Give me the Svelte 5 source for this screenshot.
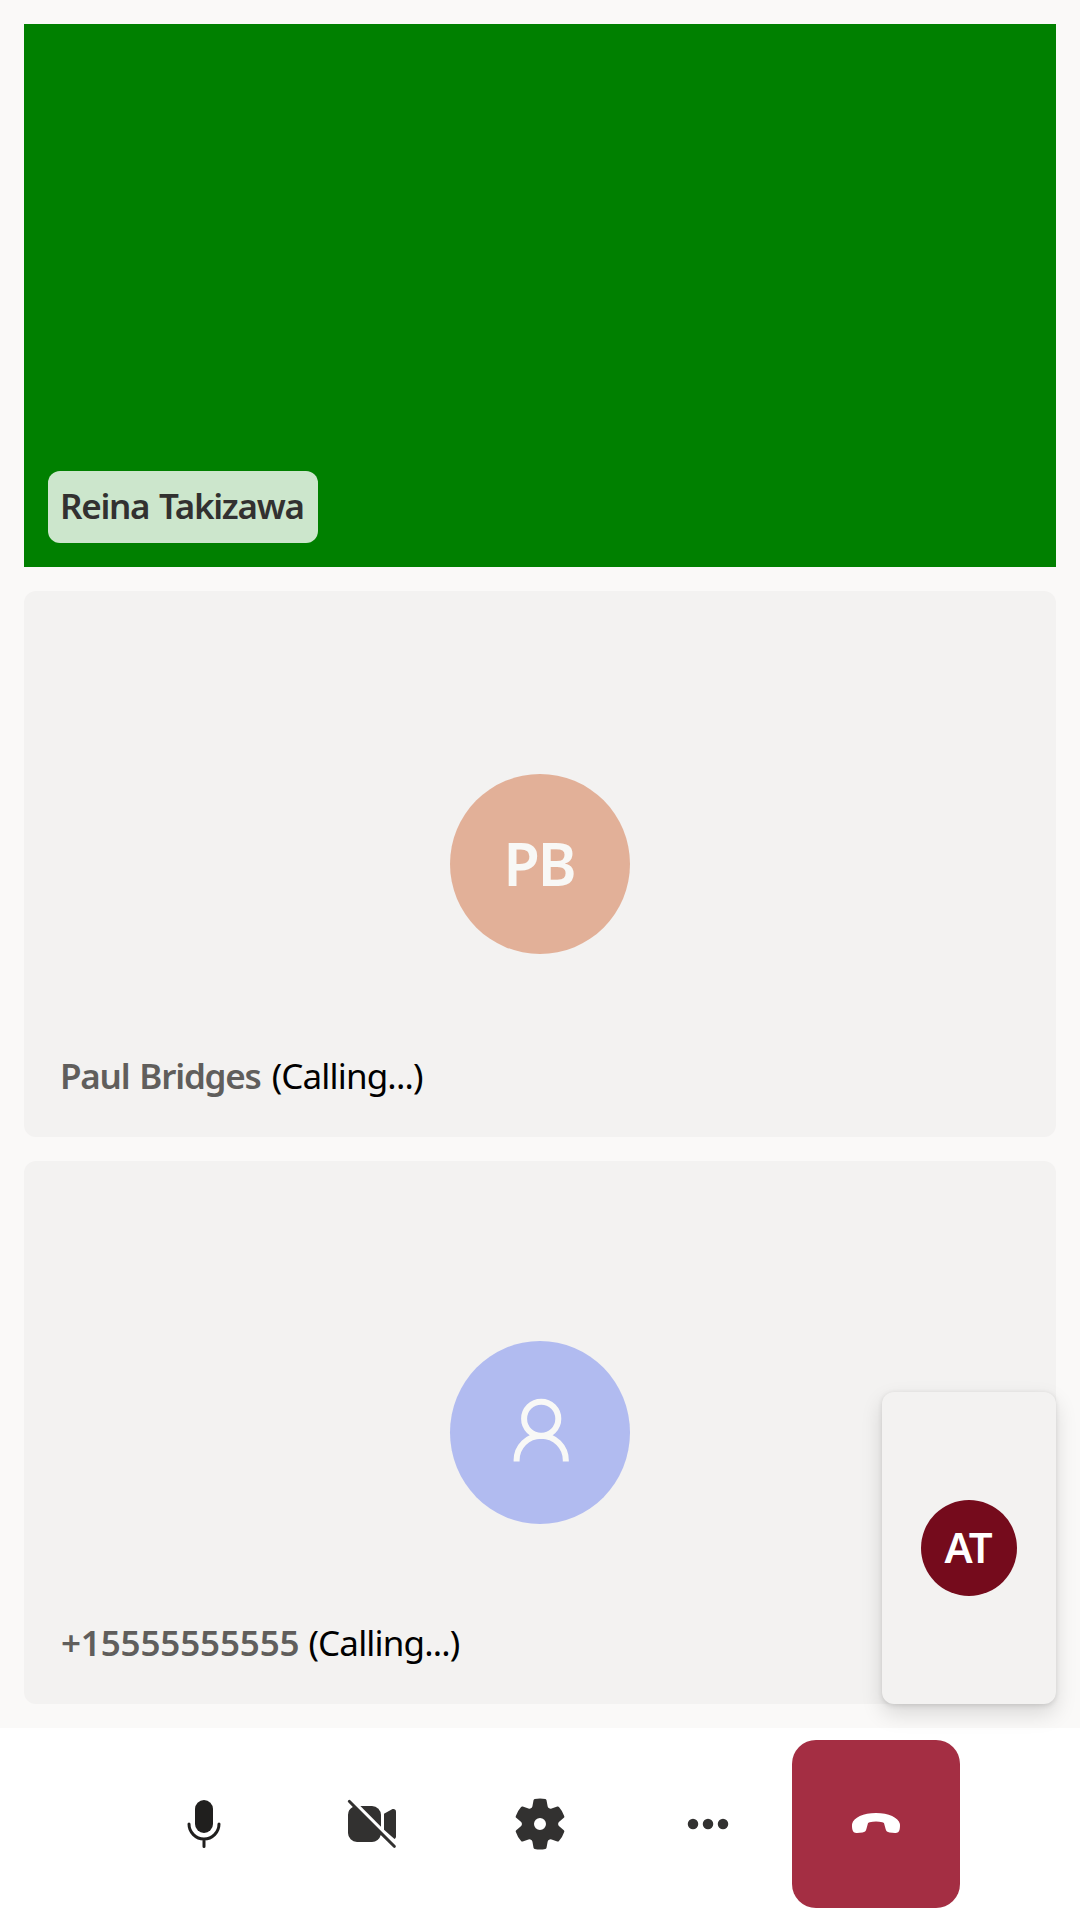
<script>
  const participants = [
    { name: 'Paul Bridges', initials: 'PB', kind: 'paul' },
    { name: '+15555555555', initials: '', kind: 'phone' }
  ];
</script>

<main class="call">
  <section class="gallery">
    <article class="tile video">
      <div class="name-tag"><span class="reina">Reina Takizawa</span></div>
    </article>

    {#each participants as person}
      <article class="tile {person.kind}">
        <div class="persona">
          {#if person.initials}
            <span>{person.initials}</span>
          {:else}
            <svg class="contact" viewBox="0 0 60 60" fill="none" stroke="currentColor" stroke-width="6">
              <circle cx="31.2" cy="18.3" r="17.1" />
              <path d="M6.6 61v-1.2a24.6 24.6 0 0 1 49.2 0V61" />
            </svg>
          {/if}
        </div>
        <div class="caption">
          <span class="who">{person.name}</span>
          <span class="status">(Calling...)</span>
        </div>
      </article>
    {/each}

    <aside class="local"><div class="me"><span>AT</span></div></aside>
  </section>

  <nav class="controls">
    <button class="mic" aria-label="Microphone">
      <svg viewBox="0 0 20 20">
        <rect x="7" y="2" width="6" height="11" rx="3" />
        <path d="M5 10a5 5 0 0 0 10 0M10 15.4v2.1" fill="none" stroke="currentColor" stroke-linecap="round" />
      </svg>
    </button>
    <button aria-label="Camera">
      <svg viewBox="0 0 20 20">
        <path d="M2.85 2.15a.5.5 0 1 0-.7.7l1.46 1.47A3 3 0 0 0 2 7v6a3 3 0 0 0 3 3h5a3 3 0 0 0 2.91-2.3l4.24 4.15a.5.5 0 0 0 .7-.7l-15-15Z" />
        <path d="M6.12 4H10a3 3 0 0 1 3 3v3.88L6.12 4Z" />
        <path d="M14 11.88V6.6l2.55-1.45c.75-.4 1.45 0 1.45.75v8.2c0 .43-.2.73-.5.9L14 11.88Z" />
      </svg>
    </button>
    <button aria-label="Settings">
      <svg viewBox="0 0 20 20">
        <path d="M1.91 7.38A8.5 8.5 0 0 1 3.7 4.3a.5.5 0 0 1 .54-.13l1.92.68a1 1 0 0 0 1.32-.76l.36-2a.5.5 0 0 1 .4-.4 8.53 8.53 0 0 1 3.55 0c.2.04.35.2.38.4l.37 2a1 1 0 0 0 1.32.76l1.92-.68a.5.5 0 0 1 .54.13 8.5 8.5 0 0 1 1.78 3.08c.06.2 0 .4-.15.54l-1.56 1.32a1 1 0 0 0 0 1.52l1.56 1.32c.15.13.21.34.15.54a8.5 8.5 0 0 1-1.78 3.08.5.5 0 0 1-.54.13l-1.92-.68a1 1 0 0 0-1.32.76l-.37 2a.5.5 0 0 1-.38.4 8.53 8.53 0 0 1-3.56 0 .5.5 0 0 1-.39-.4l-.36-2a1 1 0 0 0-1.32-.76l-1.92.68a.5.5 0 0 1-.54-.13 8.5 8.5 0 0 1-1.78-3.08.5.5 0 0 1 .15-.54l1.56-1.32a1 1 0 0 0 0-1.52L2.06 7.92a.5.5 0 0 1-.15-.54ZM8 10a2 2 0 1 0 4 0 2 2 0 0 0-4 0Z" />
      </svg>
    </button>
    <button aria-label="More">
      <svg viewBox="0 0 20 20">
        <circle cx="5" cy="10" r="1.75" /><circle cx="10" cy="10" r="1.75" /><circle cx="15" cy="10" r="1.75" />
      </svg>
    </button>
    <button class="end" aria-label="Leave">
      <svg viewBox="0 0 20 20">
        <path d="M10 6.33C14.2 6.33 17.5 7.9 17.95 9.9C18.05 10.4 18 11.2 17.85 11.9C17.65 12.7 17.1 13.08 16.3 13L14.5 12.85C13.75 12.78 13.4 12.4 13.2 11.7L12.7 9.85C12.65 9.6 12.4 9.5 12.1 9.42C10.8 9.12 9.2 9.12 7.9 9.42C7.6 9.5 7.35 9.6 7.3 9.85L6.8 11.7C6.6 12.4 6.25 12.78 5.5 12.85L3.7 13C2.9 13.08 2.35 12.7 2.15 11.9C2 11.2 1.95 10.4 2.05 9.9C2.5 7.9 5.8 6.33 10 6.33Z" />
      </svg>
    </button>
  </nav>
</main>

<style>
  :global(body) { margin: 0; }
  .call {
    width: 1080px;
    height: 1920px;
    display: flex;
    flex-direction: column;
    background: #fff;
    font-family: 'Segoe UI', 'Noto Sans', 'Open Sans', sans-serif;
  }
  .gallery {
    position: relative;
    box-sizing: border-box;
    height: 1728px;
    padding: 24px;
    display: grid;
    grid-template-rows: 543px 546px 543px;
    gap: 24px;
    background: #faf9f8;
  }
  .tile {
    box-sizing: border-box;
    display: grid;
    grid-template-rows: 1fr auto;
    background: #f3f2f1;
    border-radius: 12px;
    padding: 183px 24px 24px;
  }
  .video {
    display: flex;
    align-items: flex-end;
    background: #008000;
    border-radius: 0;
    padding: 24px;
  }
  .name-tag {
    box-sizing: border-box;
    width: 270px;
    height: 72px;
    padding: 0 12px;
    line-height: 69px;
    border-radius: 12px;
    background: rgba(255, 255, 255, 0.8);
    color: #323130;
    font-size: 35px;
    font-weight: 600;
    white-space: nowrap;
  }
  .reina { letter-spacing: -1.3px; word-spacing: 2px; }
  .persona {
    width: 180px;
    height: 180px;
    border-radius: 50%;
    justify-self: center;
    display: flex;
    align-items: center;
    justify-content: center;
    background: #e2b098;
    color: #f8f8f6;
    font-size: 59px;
    font-weight: 600;
    letter-spacing: -2px;
  }
  .persona span { padding: 0 2px 3px 0; }
  .phone { padding-top: 180px; }
  .phone .persona { height: 183px; background: #b1bbf0; }
  .contact { width: 60px; height: 61px; padding-bottom: 5px; overflow: visible; }
  .caption {
    height: 72px;
    padding: 0 12px;
    display: flex;
    gap: 11px;
    line-height: 69px;
    font-size: 35px;
    white-space: nowrap;
  }
  .who { color: #605e5c; font-weight: 600; letter-spacing: -1.2px; word-spacing: 2px; }
  .phone .caption { gap: 9px; }
  .phone .who { padding-left: 1px; letter-spacing: -0.15px; }
  .status { color: #000; font-weight: 400; letter-spacing: -0.85px; }
  .local {
    position: absolute;
    right: 24px;
    bottom: 24px;
    width: 174px;
    height: 312px;
    border-radius: 12px;
    display: flex;
    align-items: center;
    justify-content: center;
    background: #f3f2f1;
    box-shadow: 0 9.6px 21.6px rgba(0, 0, 0, 0.132), 0 1.8px 5.4px rgba(0, 0, 0, 0.108);
  }
  .me {
    width: 96px;
    height: 96px;
    border-radius: 50%;
    display: flex;
    align-items: center;
    justify-content: center;
    background: #750b1c;
    color: #fff;
    font-size: 42px;
    font-weight: 600;
    letter-spacing: -1.2px;
  }
  .me span { padding: 0 2px 3px 0; }
  .controls {
    height: 192px;
    padding-left: 120px;
    display: flex;
    align-items: center;
  }
  button {
    width: 168px;
    height: 168px;
    padding: 0;
    border: 0;
    border-radius: 24px;
    display: flex;
    align-items: center;
    justify-content: center;
    background: transparent;
    color: #323130;
  }
  button svg { width: 60px; height: 60px; fill: currentColor; }
  .mic { color: #201f1e; }
  .end { background: #a42e43; color: #fff; }
</style>
